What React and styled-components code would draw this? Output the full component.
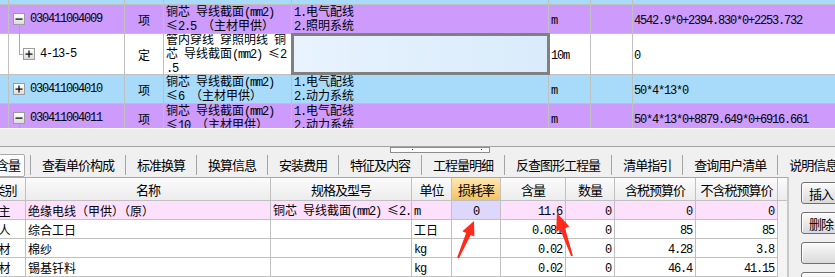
import React from 'react';
import styled, { createGlobalStyle, css } from 'styled-components';

const GlobalStyle = createGlobalStyle`
  html, body { margin: 0; padding: 0; background: #f0f0f0; }
  body {
    font-family: "Noto Sans CJK SC", "Noto Sans", sans-serif;
    font-size: 12px;
    color: #000;
  }
`;

const PURPLE = '#cc9bfc';
const BLUE = '#a8dbf9';
const LINE = '#c0c0c0';

const Page = styled.div`
  position: relative;
  width: 835px;
  height: 277px;
  overflow: hidden;
  background: #f0f0f0;
  display: flex;
  flex-direction: column;
`;

const Latin = styled.span`
  font-family: "Liberation Mono", "DejaVu Sans Mono", monospace;
  letter-spacing: -1.2px;
`;

const Text = styled.span`
  white-space: pre;
`;

function Mixed({ text }) {
  const parts = text.split(/([\x20-\x7E]+)/).filter(Boolean);
  return (
    <Text>
      {parts.map((p, i) =>
        /^[\x20-\x7E]+$/.test(p) ? <Latin key={i}>{p}</Latin> : <React.Fragment key={i}>{p}</React.Fragment>
      )}
    </Text>
  );
}

/* ---------- top grid ---------- */
const TopGrid = styled.div`
  flex: none;
  height: 128px;
  overflow: hidden;
  background: #fff;
`;

const TRow = styled.div`
  display: grid;
  grid-template-columns: 9px 116px 39px 128px 257px 42px 42px 1fr;
  box-sizing: border-box;
  height: ${p => p.$h}px;
  background: ${p => p.$bg};
  border-bottom: 1px solid ${LINE};
`;

const TCell = styled.div`
  box-sizing: border-box;
  min-width: 0;
  display: flex;
  align-items: center;
  white-space: nowrap;
  border-right: ${p => (p.$last ? 'none' : `1px solid ${LINE}`)};
  justify-content: ${p => (p.$center ? 'center' : 'flex-start')};
  padding: 0 ${p => (p.$px ?? 2)}px;
  overflow: ${p => (p.$free ? 'visible' : 'hidden')};
  ${p => p.$selected && css`
    background: linear-gradient(90deg, #e8f3fe, #d9ebfb);
    outline: 3px solid #808080;
    outline-offset: -2px;
  `}
`;

const Lines = styled.div`
  line-height: 12px;
  font-size: 12px;
`;

const Line = styled.div`
  white-space: nowrap;
`;

const TreeBox = styled.span`
  position: relative;
  flex: none;
  width: 12px;
  height: 12px;
  box-sizing: border-box;
  border: 1px solid #9c9c9c;
  background: linear-gradient(#ffffff, #dcdcdc);
  display: flex;
  align-items: center;
  justify-content: center;
  margin-right: 5px;
  ${p => p.$stem && css`
    &::after {
      content: "";
      position: absolute;
      left: 5px;
      top: 100%;
      height: 11px;
      border-left: 1px solid #a8a8a8;
    }
  `}
`;

const Elbow = styled.span`
  flex: none;
  align-self: flex-start;
  box-sizing: border-box;
  width: 4px;
  height: 21px;
  border-left: 1px solid #a8a8a8;
  border-bottom: 1px solid #a8a8a8;
`;

const Code = styled(Latin)`
  font-size: 12px;
`;

function Sign({ plus }) {
  return (
    <svg width="8" height="8" viewBox="0 0 8 8">
      <rect x="0.5" y="3.5" width="7" height="1.2" fill="#000" />
      {plus && <rect x="3.4" y="0.5" width="1.2" height="7" fill="#000" />}
    </svg>
  );
}

const topRows = [
  { h: 29, bg: PURPLE, sign: 'minus', stem: true, code: '030411004009', type: '项',
    name: ['铜芯 导线截面(mm2)', '≤2.5 （主材甲供）'], feat: ['1.电气配线', '2.照明系统'],
    unit: 'm', expr: '4542.9*0+2394.830*0+2253.732' },
  { h: 41, bg: '#fff', child: true, sign: 'plus', code: '4-13-5', type: '定',
    name: ['管内穿线 穿照明线 铜', '芯 导线截面(mm2) ≤2', '.5'], feat: [], selected: true,
    unit: '10m', expr: '0' },
  { h: 29, bg: BLUE, sign: 'plus', code: '030411004010', type: '项',
    name: ['铜芯 导线截面(mm2)', '≤6 （主材甲供）'], feat: ['1.电气配线', '2.动力系统'],
    unit: 'm', expr: '50*4*13*0' },
  { h: 29, bg: PURPLE, sign: 'minus', stem: true, code: '030411004011', type: '项',
    name: ['铜芯 导线截面(mm2)', '≤10 （主材甲供）'], feat: ['1.电气配线', '2.动力系统'],
    unit: 'm', expr: '50*4*13*0+8879.649*0+6916.661' },
];

/* ---------- middle ---------- */
const Gap = styled.div`
  flex: none;
  box-sizing: border-box;
  height: 19px;
  background: #ebebeb;
  border-top: 1px solid #f7f7f7;
  border-bottom: 1px solid #a3a3a3;
`;

const TabArea = styled.div`
  flex: none;
  height: 30px;
  display: flex;
  flex-direction: column;
  background: #f0f0f0;
`;

const GripRow = styled.div`
  height: 6px;
  display: flex;
`;

const Grip = styled.div`
  margin-left: 390px;
  width: 100px;
  height: 6px;
  box-sizing: border-box;
  border: 1px solid #8c8c8c;
  background: #fbfbfb;
  display: flex;
  justify-content: space-between;
  padding: 1px 7px 0 21px;
`;

const GripDot = styled.span`
  width: 1px;
  height: 1px;
  background: #1a2a80;
`;

const TabRow = styled.div`
  height: 24px;
  display: flex;
  align-items: center;
  white-space: nowrap;
  font-size: 13px;
  letter-spacing: -1px;
  line-height: 20px;
`;

const ActiveTab = styled.div`
  flex: none;
  box-sizing: border-box;
  height: 23px;
  margin-left: -8px;
  margin-right: 5px;
  padding: 0 4px 0 3px;
  border: 1px solid #aaaaaa;
  border-radius: 2px;
  background: #fbfbfb;
  box-shadow: inset 0 0 0 1px #ffffff;
  display: flex;
  align-items: center;
`;

const Tab = styled.div`
  flex: none;
  height: 20px;
  padding: 0 11px;
  border-left: 1px solid #a3a3a3;
  display: flex;
  align-items: center;
`;

const tabs = ['查看单价构成', '标准换算', '换算信息', '安装费用', '特征及内容', '工程量明细', '反查图形工程量', '清单指引', '查询用户清单', '说明信息'];

/* ---------- bottom ---------- */
const Bottom = styled.div`
  flex: 1;
  display: flex;
  min-height: 0;
`;

const BGrid = styled.div`
  flex: none;
  margin-left: -16px;
  width: 805px;
  box-sizing: border-box;
  border-top: 1px solid #a8a8a8;
  border-right: 2px solid #c8c8c8;
  background: #fff;
`;

const COLS = '42px 245px 141px 40px 49px 65px 49px 81px 82px 9px';

const BRow = styled.div`
  display: grid;
  grid-template-columns: ${COLS};
  height: ${p => (p.$head ? 23 : 19)}px;
  background: ${p => p.$bg || '#fff'};
`;

const HCell = styled.div`
  box-sizing: border-box;
  display: flex;
  align-items: center;
  justify-content: center;
  white-space: nowrap;
  overflow: hidden;
  font-size: 13px;
  letter-spacing: -1px;
  border-right: 1px solid ${LINE};
  border-bottom: 1px solid ${LINE};
  background: ${p => (p.$hot
    ? 'linear-gradient(#fde8b2, #f3c366)'
    : 'linear-gradient(#fbfbfb, #ececec)')};
`;

const BCell = styled.div`
  box-sizing: border-box;
  min-width: 0;
  display: flex;
  align-items: center;
  white-space: nowrap;
  overflow: hidden;
  padding: 0 ${p => (p.$right ? 3 : 2)}px 0 2px;
  justify-content: ${p => (p.$center ? 'center' : p.$right ? 'flex-end' : 'flex-start')};
  border-right: 1px solid ${LINE};
  border-bottom: 1px solid ${LINE};
  background: ${p => p.$bg || 'transparent'};
  font-size: 12px;
`;

const Filler = styled.div`
  background: #f4f4f4;
`;

const HFiller = styled.div`
  background: linear-gradient(#fbfbfb, #ececec);
  border-bottom: 1px solid ${LINE};
`;

const Side = styled.div`
  flex: 1;
  display: flex;
  flex-direction: column;
  gap: 8px;
  padding: 5px 0 0 12px;
  overflow: hidden;
`;

const Button = styled.div`
  flex: none;
  box-sizing: border-box;
  width: 60px;
  height: 22px;
  padding-left: 7px;
  border: 1px solid #707070;
  border-radius: 3px;
  background: linear-gradient(#fafafa, #dadada);
  box-shadow: inset 1px 1px 0 #ffffff;
  display: flex;
  align-items: center;
  font-size: 13px;
  letter-spacing: -1px;
`;

const Overlay = styled.svg`
  position: absolute;
  left: 0;
  top: 0;
  pointer-events: none;
`;

const bottomRows = [
  { bg: '#fde0fb', lossBg: '#dcd7fb', cat: '主', name: '绝缘电线（甲供）（原）', spec: '铜芯 导线截面(mm2) ≤2.5', unit: 'm', loss: '0', qty: '11.6', num: '0', tax: '0', notax: '0' },
  { cat: '人', name: '综合工日', spec: '', unit: '工日', loss: '', qty: '0.081', num: '0', tax: '85', notax: '85' },
  { cat: '材', name: '棉纱', spec: '', unit: 'kg', loss: '', qty: '0.02', num: '0', tax: '4.28', notax: '3.8' },
  { cat: '材', name: '锡基钎料', spec: '', unit: 'kg', loss: '', qty: '0.02', num: '0', tax: '46.4', notax: '41.15' },
];

const headers = ['类别', '名称', '规格及型号', '单位', '损耗率', '含量', '数量', '含税预算价', '不含税预算价'];

export default function App() {
  return (
    <>
      <GlobalStyle />
      <Page>
        <TopGrid>
          <TRow $h={5} $bg={BLUE}>
            <TCell /><TCell /><TCell /><TCell /><TCell /><TCell /><TCell /><TCell $last />
          </TRow>
          {topRows.map((r, i) => (
            <TRow key={i} $h={r.h} $bg={r.bg}>
              <TCell />
              <TCell $free $px={r.child ? 10 : 4}>
                {r.child && <Elbow />}
                <TreeBox $stem={r.stem}><Sign plus={r.sign === 'plus'} /></TreeBox>
                <Code>{r.code}</Code>
              </TCell>
              <TCell $center>{r.type}</TCell>
              <TCell>
                <Lines>{r.name.map((l, j) => <Line key={j}><Mixed text={l} /></Line>)}</Lines>
              </TCell>
              <TCell $selected={r.selected}>
                <Lines>{r.feat.map((l, j) => <Line key={j}><Mixed text={l} /></Line>)}</Lines>
              </TCell>
              <TCell><Mixed text={r.unit} /></TCell>
              <TCell />
              <TCell $last $px={1}><Mixed text={r.expr} /></TCell>
            </TRow>
          ))}
        </TopGrid>

        <Gap />

        <TabArea>
          <GripRow>
            <Grip><GripDot /><GripDot /></Grip>
          </GripRow>
          <TabRow>
            <ActiveTab>含量</ActiveTab>
            {tabs.map(t => <Tab key={t}>{t}</Tab>)}
          </TabRow>
        </TabArea>

        <Bottom>
          <BGrid>
            <BRow $head>
              {headers.map(h => <HCell key={h} $hot={h === '损耗率'}>{h}</HCell>)}
              <HFiller />
            </BRow>
            {bottomRows.map((r, i) => (
              <BRow key={i} $bg={r.bg}>
                <BCell $center>{r.cat}</BCell>
                <BCell><Mixed text={r.name} /></BCell>
                <BCell><Mixed text={r.spec} /></BCell>
                <BCell><Mixed text={r.unit} /></BCell>
                <BCell $center $bg={r.lossBg}><Mixed text={r.loss} /></BCell>
                <BCell $right><Mixed text={r.qty} /></BCell>
                <BCell $right><Mixed text={r.num} /></BCell>
                <BCell $right><Mixed text={r.tax} /></BCell>
                <BCell $right><Mixed text={r.notax} /></BCell>
                <Filler />
              </BRow>
            ))}
          </BGrid>
          <Side>
            <Button>插入</Button>
            <Button>删除</Button>
            <Button />
            <Button />
          </Side>
        </Bottom>

        <Overlay width="835" height="277" viewBox="0 0 835 277">
          <polygon
            fill="#ff2a1a"
            points="457.1,257.6 466.1,232.9 462.4,231.3 474,221 474.4,236.5 470.7,234.9 458.9,258.4"
          />
          <polygon
            fill="#ff2a1a"
            points="572.9,255.7 565.1,228.2 569.3,226.6 557,213 556.1,231.4 560.3,229.8 571.1,256.3"
          />
        </Overlay>
      </Page>
    </>
  );
}
